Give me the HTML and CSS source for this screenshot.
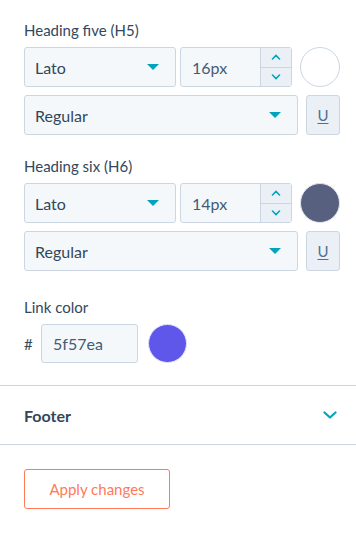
FILE: index.html
```html
<!DOCTYPE html>
<html lang="en">
<head>
  <meta charset="UTF-8" />
  <meta name="viewport" content="width=device-width, initial-scale=1.0" />
  <title>Theme settings</title>
  <link rel="stylesheet" href="styles.css">
</head>
<body>
  <div class="panel">
    <div class="group">
      <div class="label">Heading five (H5)</div>
      <div class="row">
        <div class="select font-select">Lato <span class="caret"></span></div>
        <div class="number">
          <span class="value">16px</span>
          <div class="stepper">
            <span class="step"><svg width="10" height="6" viewBox="0 0 10 6"><path d="M1.5 5L5 1.5L8.5 5" fill="none" stroke="#00a4bd" stroke-width="1.6" stroke-linecap="round"/></svg></span>
            <span class="step"><svg width="10" height="6" viewBox="0 0 10 6"><path d="M1.5 1L5 4.5L8.5 1" fill="none" stroke="#00a4bd" stroke-width="1.6" stroke-linecap="round"/></svg></span>
          </div>
        </div>
        <div class="swatch white"></div>
      </div>
      <div class="row">
        <div class="select">Regular <span class="caret"></span></div>
        <div class="underline-btn">U</div>
      </div>
    </div>

    <div class="group">
      <div class="label">Heading six (H6)</div>
      <div class="row">
        <div class="select font-select">Lato <span class="caret"></span></div>
        <div class="number">
          <span class="value">14px</span>
          <div class="stepper">
            <span class="step"><svg width="10" height="6" viewBox="0 0 10 6"><path d="M1.5 5L5 1.5L8.5 5" fill="none" stroke="#00a4bd" stroke-width="1.6" stroke-linecap="round"/></svg></span>
            <span class="step"><svg width="10" height="6" viewBox="0 0 10 6"><path d="M1.5 1L5 4.5L8.5 1" fill="none" stroke="#00a4bd" stroke-width="1.6" stroke-linecap="round"/></svg></span>
          </div>
        </div>
        <div class="swatch slate"></div>
      </div>
      <div class="row">
        <div class="select">Regular <span class="caret"></span></div>
        <div class="underline-btn">U</div>
      </div>
    </div>

    <div class="group link-group">
      <div class="label">Link color</div>
      <div class="hex-row">
        <span class="hash">#</span>
        <div class="hex-input">5f57ea</div>
        <div class="swatch purple"></div>
      </div>
    </div>
  </div>

  <div class="accordion">
    <span class="accordion-title">Footer</span>
    <svg width="14" height="8" viewBox="0 0 14 8"><path d="M1.5 1.5L7 6.5L12.5 1.5" fill="none" stroke="#00a4bd" stroke-width="2.2" stroke-linecap="round" stroke-linejoin="round"/></svg>
  </div>

  <div class="actions">
    <button class="apply-btn">Apply changes</button>
  </div>
</body>
</html>
```

FILE: styles.css
```css
html, body {
  margin: 0;
  padding: 0;
  background: #fff;
  font-family: Lato, "Noto Sans", sans-serif;
  color: #33475b;
}
.panel {
  padding: 20px 16px 22px 24px;
}
.group {
  margin-bottom: 21px;
}
.group.link-group {
  margin-top: 26px;
  margin-bottom: 0;
}
.label {
  font-size: 15px;
  line-height: 20px;
  margin-bottom: 7px;
}
.row {
  display: flex;
  align-items: center;
  gap: 8px;
  margin-bottom: 8px;
}
.row:last-child {
  margin-bottom: 0;
}
.select {
  flex: 1;
  height: 40px;
  box-sizing: border-box;
  display: flex;
  align-items: center;
  justify-content: space-between;
  padding: 0 16px 0 10px;
  background: #f5f8fa;
  border: 1px solid #cbd6e2;
  border-radius: 3px;
  font-size: 16px;
}
.font-select {
  margin-right: -4px;
}
.caret {
  width: 0;
  height: 0;
  border-left: 6px solid transparent;
  border-right: 6px solid transparent;
  border-top: 6px solid #00a4bd;
}
.number {
  width: 112px;
  height: 40px;
  box-sizing: border-box;
  display: flex;
  background: #f5f8fa;
  border: 1px solid #cbd6e2;
  border-radius: 3px;
}
.number .value {
  flex: 1;
  display: flex;
  align-items: center;
  padding-left: 11px;
  font-size: 16px;
  color: #425b76;
}
.stepper {
  width: 30px;
  display: flex;
  flex-direction: column;
  border-left: 1px solid #cbd6e2;
}
.step {
  flex: 1;
  display: flex;
  align-items: center;
  justify-content: center;
  background: #eaf0f6;
}
.step + .step {
  border-top: 1px solid #cbd6e2;
}
.swatch {
  width: 40px;
  height: 40px;
  box-sizing: border-box;
  border-radius: 50%;
  border: 1px solid #cbd6e2;
  flex-shrink: 0;
}
.swatch.white {
  background: #fff;
}
.swatch.slate {
  background: #58607f;
  border-color: #dfe3eb;
}
.swatch.purple {
  width: 39px;
  height: 39px;
  background: #5f57ea;
  border-color: #e4e2fb;
}
.underline-btn {
  width: 34px;
  height: 40px;
  box-sizing: border-box;
  display: flex;
  align-items: center;
  justify-content: center;
  background: #eaf0f6;
  border: 1px solid #cbd6e2;
  border-radius: 3px;
  font-size: 15px;
  color: #516f90;
  text-decoration: underline;
  text-underline-offset: 2px;
}
.hex-row {
  display: flex;
  align-items: center;
}
.hash {
  width: 17px;
  font-size: 15px;
}
.hex-input {
  width: 97px;
  height: 39px;
  box-sizing: border-box;
  display: flex;
  align-items: center;
  padding-left: 11px;
  margin-right: 10px;
  background: #f5f8fa;
  border: 1px solid #cbd6e2;
  border-radius: 3px;
  font-size: 16px;
  color: #425b76;
}
.accordion {
  display: flex;
  align-items: center;
  justify-content: space-between;
  height: 58px;
  padding: 0 19px 0 24px;
  border-top: 1px solid #cbd6e2;
  border-bottom: 1px solid #cbd6e2;
}
.accordion-title {
  font-size: 16px;
  font-weight: 700;
}
.actions {
  padding: 24px 24px;
}
.apply-btn {
  width: 146px;
  height: 40px;
  background: #fff;
  border: 1px solid #ff7a59;
  border-radius: 3px;
  color: #ff7a59;
  font-family: Lato, "Noto Sans", sans-serif;
  font-size: 15px;
  padding: 0;
}
```
